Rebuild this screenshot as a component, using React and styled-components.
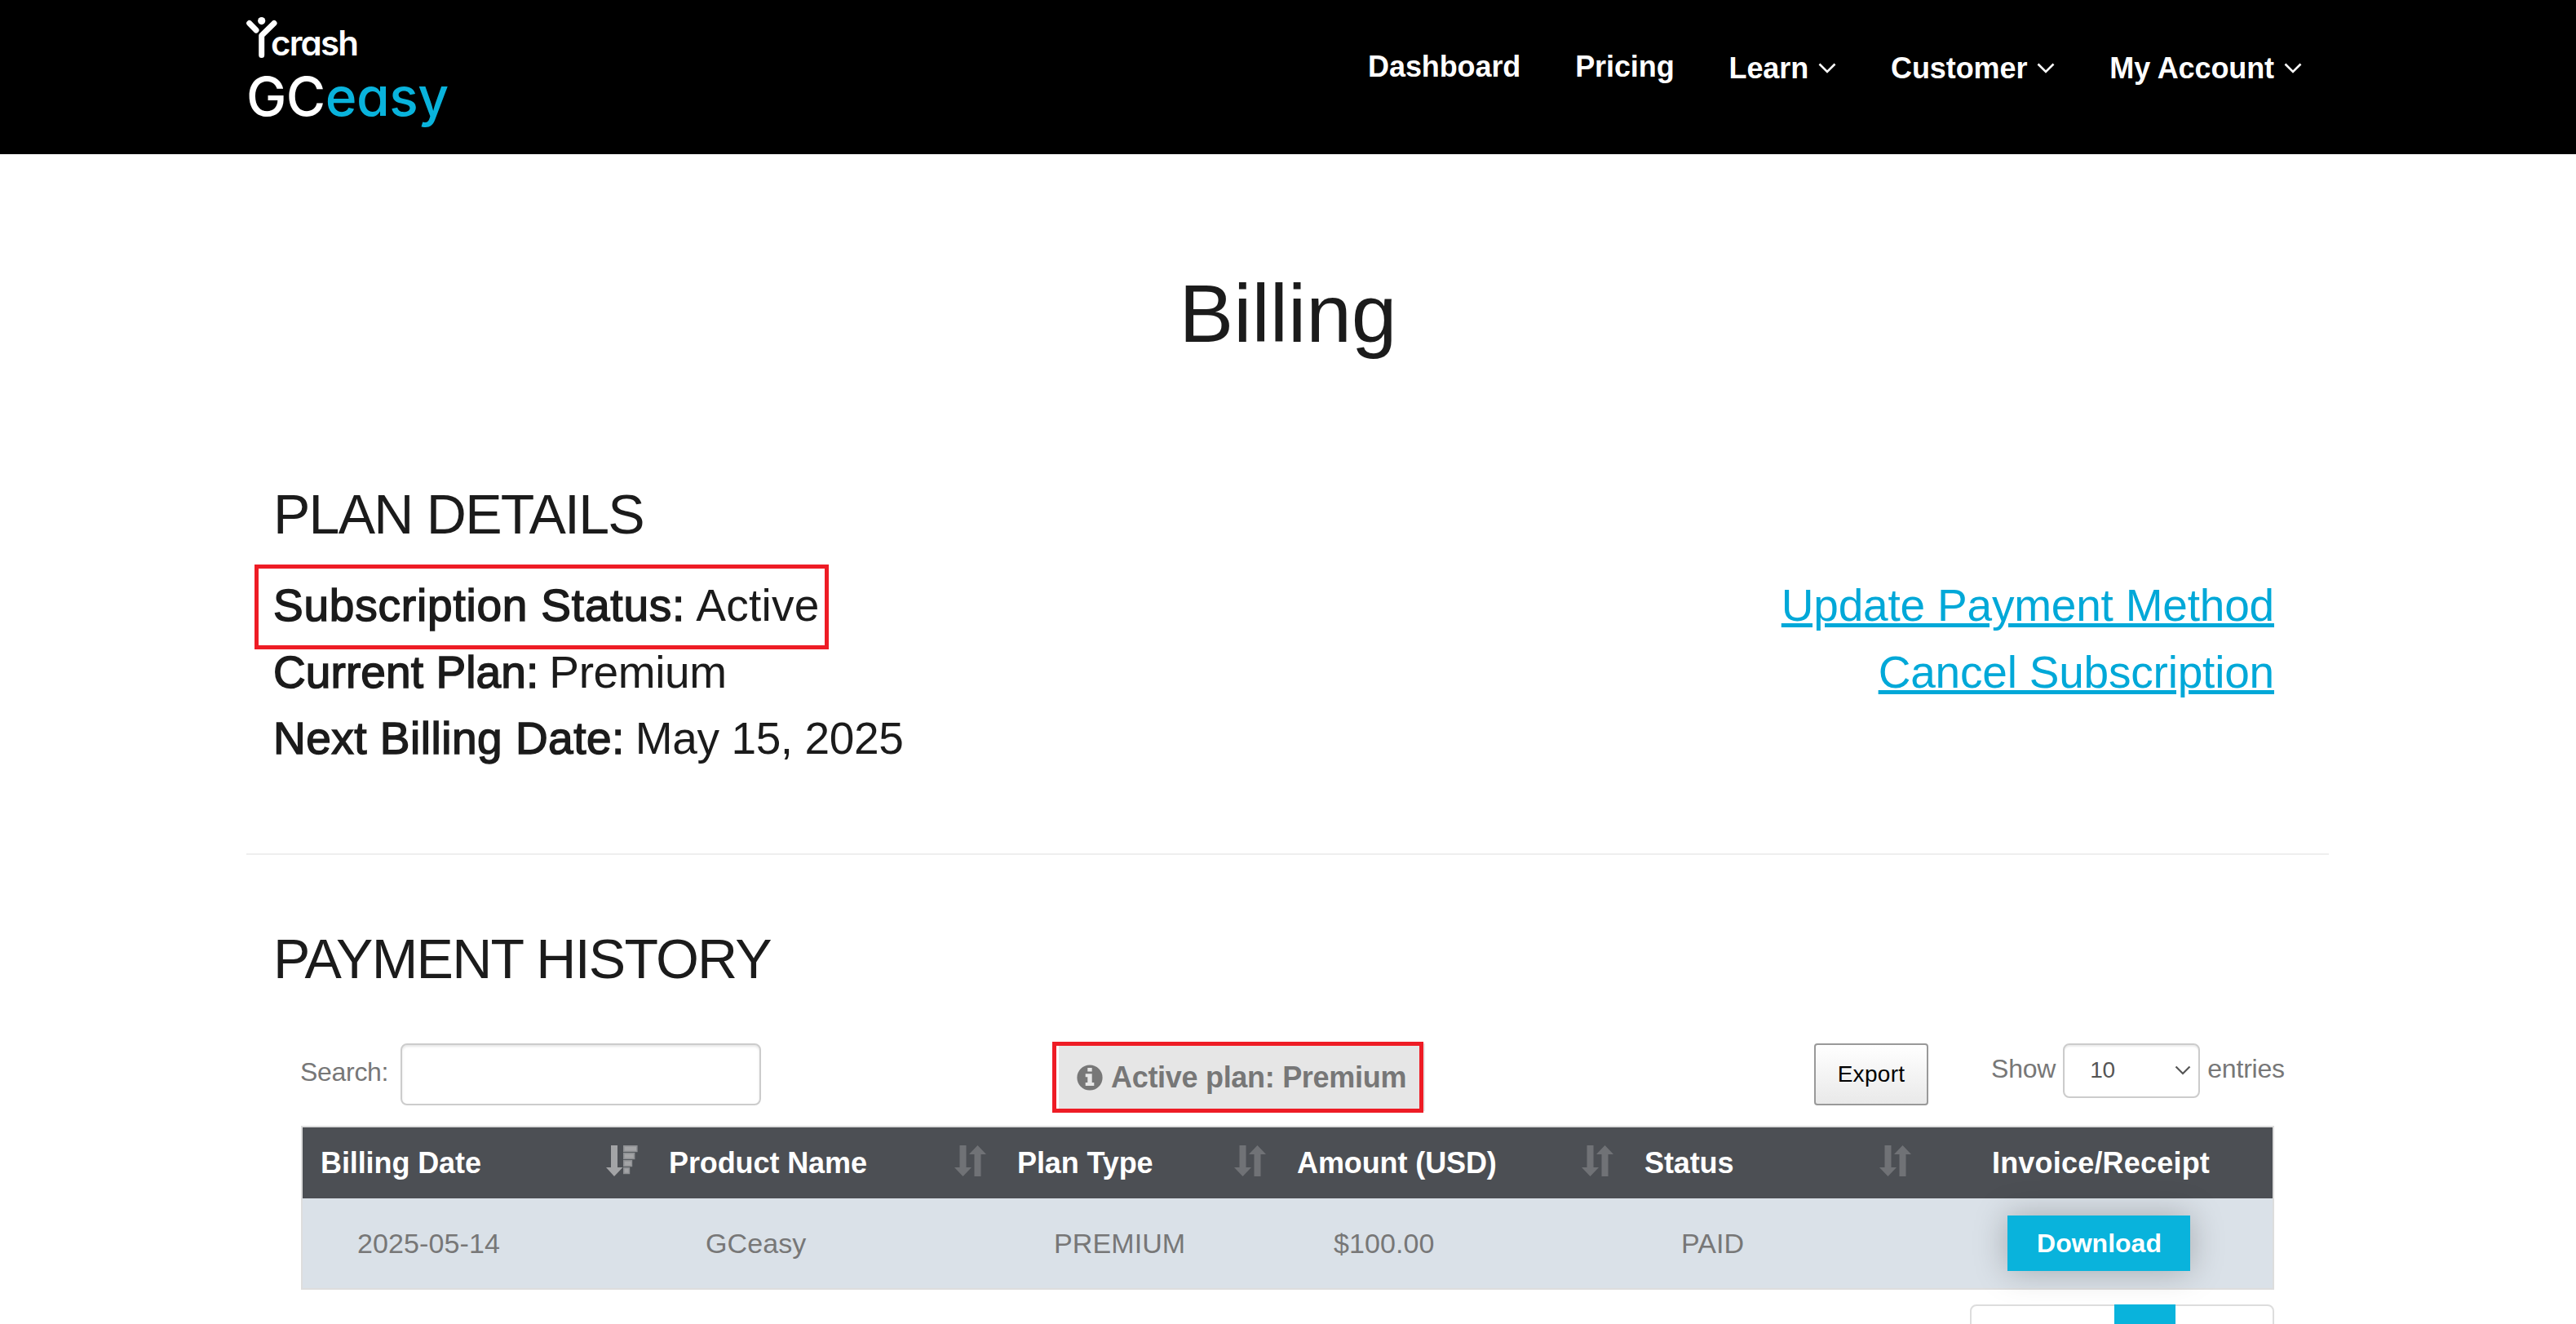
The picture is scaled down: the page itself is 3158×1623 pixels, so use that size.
import React from "react";
import styled, { createGlobalStyle, css } from "styled-components";

const navItems = [
  { label: "Dashboard" },
  { label: "Pricing" },
  { label: "Learn", menu: true },
  { label: "Customer", menu: true },
  { label: "My Account", menu: true },
];

const columns = [
  { label: "Billing Date", width: 427, sort: "desc" },
  { label: "Product Name", width: 427, sort: "none" },
  { label: "Plan Type", width: 343, sort: "none" },
  { label: "Amount (USD)", width: 426, sort: "none" },
  { label: "Status", width: 365, sort: "none" },
  { label: "Invoice/Receipt", width: 427 },
];

const payments = [
  {
    date: "2025-05-14",
    product: "GCeasy",
    plan: "PREMIUM",
    amount: "$100.00",
    status: "PAID",
  },
];

const Chevron = ({ width = 22, height = 13, stroke = 2.6 }) => (
  <svg width={width} height={height} viewBox={`0 0 ${width} ${height}`}>
    <path
      d={`M1.5 1.5 L${width / 2} ${height - 2} L${width - 1.5} 1.5`}
      fill="none"
      stroke="currentColor"
      strokeWidth={stroke}
    />
  </svg>
);

const InfoIcon = () => (
  <svg width="32" height="32" viewBox="0 0 32 32">
    <circle cx="16" cy="16" r="15.6" fill="currentColor" />
    <path
      d="M13.3 4H18.7V8.6H13.3Z M10.7 11.2H18.7V22H21.3V26H10.7V22H13.3V15.2H10.7Z"
      fill="#e6e6e6"
    />
  </svg>
);

const SortIcon = ({ type }) =>
  type === "desc" ? (
    <svg width="39" height="38" viewBox="0 0 39 38">
      <path d="M6 0H14V27H20.5L10 38L0 27H6Z" fill="#a3a4a6" />
      <g fill="#a3a4a6" stroke="#8e9093" strokeWidth="1.6">
        <rect x="21.8" y="0.8" width="16" height="6.6" />
        <rect x="21.8" y="9.8" width="12.8" height="6.6" />
        <rect x="21.8" y="18.8" width="9.6" height="6.6" />
        <rect x="21.8" y="27.8" width="6.6" height="6.6" />
      </g>
    </svg>
  ) : (
    <svg width="39" height="38" viewBox="0 0 39 38">
      <path
        d="M6.5 0H14.5V27H21L10.5 38L0 27H6.5Z M24.5 38V11H18L28.5 0L39 11H32.5V38Z"
        fill="#707276"
      />
    </svg>
  );

const Logo = () => (
  <LogoLink>
    <LogoTop>
      <svg width="40" height="54" viewBox="0 0 40 54">
        <g stroke="#fff" strokeWidth="7" strokeLinecap="round" fill="none">
          <path d="M3.7 10.5L12 19" />
          <path d="M34 10.5L18.7 25.5V49.5" strokeLinejoin="round" />
        </g>
        <circle cx="18.7" cy="7.6" r="4.6" fill="#fff" />
      </svg>
      <span>crash</span>
    </LogoTop>
    <LogoName>
      GC<em>easy</em>
    </LogoName>
  </LogoLink>
);

const App = () => {
  return (
    <Page>
      <GlobalStyle />
      <Header>
        <Logo />
        <Nav>
          {navItems.map((item) => (
            <NavItem key={item.label} $menu={item.menu}>
              {item.label}
              {item.menu && <Chevron />}
            </NavItem>
          ))}
        </Nav>
      </Header>

      <Title>Billing</Title>

      <Container>
        <SectionTitle>PLAN DETAILS</SectionTitle>
        <PlanDetails>
          <div>
            <PlanRow $marked>
              <Label $spacing={0.8}>Subscription Status:</Label>Active
            </PlanRow>
            <PlanRow>
              <Label $spacing={0.1}>Current Plan:</Label>Premium
            </PlanRow>
            <PlanRow>
              <Label $spacing={0.5}>Next Billing Date:</Label>May 15, 2025
            </PlanRow>
          </div>
          <PlanLinks>
            <a>Update Payment Method</a>
            <a>Cancel Subscription</a>
          </PlanLinks>
        </PlanDetails>

        <Divider />

        <SectionTitle>PAYMENT HISTORY</SectionTitle>
        <Toolbar>
          <SearchLabel>
            <span>Search:</span>
            <SearchInput type="text" />
          </SearchLabel>
          <ActivePlan>
            <InfoIcon />
            Active plan: Premium
          </ActivePlan>
          <Controls>
            <ExportButton>Export</ExportButton>
            <Entries>
              Show
              <EntriesSelect>
                10
                <Chevron width={20} height={12} stroke={2.2} />
              </EntriesSelect>
              entries
            </Entries>
          </Controls>
        </Toolbar>

        <Table>
          <colgroup>
            {columns.map((col) => (
              <Col key={col.label} $width={col.width} />
            ))}
          </colgroup>
          <thead>
            <tr>
              {columns.map((col) => (
                <Th key={col.label}>
                  <ThInner $center={!col.sort}>
                    {col.label}
                    {col.sort && <SortIcon type={col.sort} />}
                  </ThInner>
                </Th>
              ))}
            </tr>
          </thead>
          <tbody>
            {payments.map((p) => (
              <tr key={p.date}>
                <Td>{p.date}</Td>
                <Td>{p.product}</Td>
                <Td>{p.plan}</Td>
                <Td>{p.amount}</Td>
                <Td>{p.status}</Td>
                <Td $center>
                  <DownloadButton>Download</DownloadButton>
                </Td>
              </tr>
            ))}
          </tbody>
        </Table>

        <Pagination>
          <CurrentPage />
        </Pagination>
      </Container>
    </Page>
  );
};

const GlobalStyle = createGlobalStyle`
  *,
  *::before,
  *::after {
    box-sizing: border-box;
  }

  body {
    margin: 0;
    overflow: hidden;
    background: #fff;
    font-family: "Liberation Sans", Arial, sans-serif;
  }
`;

const redFrame = css`
  content: "";
  position: absolute;
  border: 5px solid #ee1c25;
  pointer-events: none;
`;

const Page = styled.div`
  height: 1623px;
  overflow: hidden;
  display: flex;
  flex-direction: column;
  color: #1b1b1b;
`;

const Header = styled.header`
  flex: none;
  height: 189px;
  padding: 0 336px 0 302px;
  display: flex;
  justify-content: space-between;
  align-items: flex-start;
  background: #000;
  color: #fff;
`;

const LogoLink = styled.a`
  display: flex;
  flex-direction: column;
  padding-top: 18px;
  font-family: Inter, "Liberation Sans", sans-serif;
  font-feature-settings: "cv11";
`;

const LogoTop = styled.div`
  display: flex;
  height: 54px;

  span {
    margin-left: -10px;
    font-size: 42px;
    font-weight: 600;
    line-height: 70px;
    letter-spacing: -1.8px;
  }
`;

const LogoName = styled.div`
  margin-top: 7px;
  font-size: 66px;
  font-weight: 500;
  line-height: 78px;
  letter-spacing: -0.5px;

  em {
    font-style: normal;
    color: #09b3dc;
  }
`;

const Nav = styled.nav`
  display: flex;
  gap: 67px;
  padding-top: 61px;
`;

const NavItem = styled.a`
  display: flex;
  align-items: center;
  margin-top: ${(props) => (props.$menu ? "2px" : "0")};
  height: 42px;
  font-size: 36px;
  font-weight: 700;
  line-height: 42px;
  letter-spacing: -0.1px;
  white-space: nowrap;

  svg {
    margin-left: 12px;
    margin-bottom: 2px;
  }
`;

const Title = styled.h1`
  margin: 140px 0 151px;
  font-size: 100px;
  font-weight: 400;
  line-height: 110px;
  text-align: center;
`;

const Container = styled.main`
  width: 2553px;
  margin-left: 302px;
  display: flex;
  flex-direction: column;
`;

const SectionTitle = styled.h2`
  margin: 0 0 0 33px;
  font-size: 68px;
  font-weight: 400;
  line-height: 80px;
  letter-spacing: -1.75px;
`;

const PlanDetails = styled.section`
  display: flex;
  justify-content: space-between;
  padding: 32px 67px 99px 33px;
  font-size: 55px;
  line-height: 81.5px;
`;

const PlanRow = styled.div`
  position: relative;
  letter-spacing: -0.4px;

  ${(props) =>
    props.$marked &&
    css`
      letter-spacing: 0.3px;

      &::after {
        ${redFrame}
        left: -23px;
        top: -10px;
        width: 704px;
        height: 104px;
      }
    `}
`;

const Label = styled.span`
  margin-right: 13px;
  letter-spacing: ${(props) => props.$spacing}px;
  -webkit-text-stroke: 1.5px currentColor;
`;

const PlanLinks = styled.div`
  display: flex;
  flex-direction: column;
  align-items: flex-end;
  color: #00a8d8;
  letter-spacing: -0.2px;

  a {
    text-decoration: underline;
    text-decoration-thickness: 5px;
    text-underline-offset: 3px;
  }
`;

const Divider = styled.hr`
  width: 100%;
  height: 2px;
  margin: 0 0 87px;
  border: 0;
  background: #eee;
`;

const Toolbar = styled.div`
  display: grid;
  grid-template-columns: 922px 934px auto;
  align-items: start;
  height: 101px;
  margin: 64px 0 0 66px;
  font-size: 32px;
  color: #777;
`;

const SearchLabel = styled.label`
  display: flex;
  align-items: center;

  span {
    width: 123px;
    padding-bottom: 5px;
    letter-spacing: -0.3px;
  }
`;

const SearchInput = styled.input`
  width: 442px;
  height: 76px;
  border: 2px solid #ccc;
  border-radius: 8px;
  background: #fff;
  box-shadow: inset 0 2px 3px rgba(0, 0, 0, 0.1);
  outline: none;
`;

const ActivePlan = styled.div`
  position: relative;
  display: flex;
  align-items: center;
  gap: 10px;
  width: 449px;
  height: 83px;
  margin-left: 8px;
  padding: 1px 0 0 22px;
  background: #e6e6e6;
  font-size: 36px;
  font-weight: 700;
  letter-spacing: -0.3px;
  white-space: nowrap;

  &::after {
    ${redFrame}
    left: -8px;
    top: -2px;
    width: 455px;
    height: 87px;
  }
`;

const Controls = styled.div`
  display: flex;
  align-items: flex-start;
  gap: 77px;
`;

const ExportButton = styled.button`
  width: 140px;
  height: 76px;
  padding: 1px 0 0;
  border: 2px solid #999;
  border-radius: 4px;
  background: linear-gradient(to bottom, #fff 0%, #e9e9e9 100%);
  color: #000;
  font-family: inherit;
  font-size: 28px;
  letter-spacing: 0.3px;
`;

const Entries = styled.div`
  display: flex;
  align-items: center;
  gap: 9px;
  height: 63px;
  letter-spacing: -0.2px;
`;

const EntriesSelect = styled.div`
  display: flex;
  align-items: center;
  justify-content: space-between;
  width: 168px;
  height: 67px;
  margin-top: 4px;
  padding: 0 9px 0 31px;
  border: 2px solid #ccc;
  border-radius: 8px;
  background: #fff;
  box-shadow: inset 0 2px 2px rgba(0, 0, 0, 0.08);
  color: #555;
  font-size: 28px;
`;

const Table = styled.table`
  width: 2419px;
  margin-left: 67px;
  table-layout: fixed;
  border: 2px solid #ddd;
  border-spacing: 0;
  font-size: 34px;
  color: #777;
`;

const Col = styled.col`
  width: ${(props) => props.$width}px;
`;

const Th = styled.th`
  height: 87px;
  padding: 1px 16px 0 22px;
  background: #4c4f54;
  color: #fff;
  font-size: 36px;
  text-align: left;
`;

const ThInner = styled.div`
  display: flex;
  align-items: center;
  justify-content: ${(props) => (props.$center ? "center" : "space-between")};
  letter-spacing: ${(props) => (props.$center ? "0.2px" : "-0.1px")};
  white-space: nowrap;

  svg {
    margin-top: -5px;
  }
`;

const Td = styled.td`
  height: 110px;
  padding: ${(props) => (props.$center ? "0" : "1px 0 0 67px")};
  background: #dae1e8;
  text-align: ${(props) => (props.$center ? "center" : "left")};
  letter-spacing: 0.1px;
`;

const DownloadButton = styled.button`
  display: block;
  width: 224px;
  height: 68px;
  margin: 0 auto;
  padding: 1px 0 0 2px;
  border: 0;
  background: #09b3dc;
  box-shadow: 0 0 40px rgba(0, 0, 0, 0.25);
  color: #fff;
  font-family: inherit;
  font-size: 32px;
  font-weight: 700;
`;

const Pagination = styled.div`
  display: flex;
  align-self: flex-end;
  width: 373px;
  height: 76px;
  margin: 18px 67px 0 0;
  padding-left: 175px;
  border: 2px solid #ddd;
  border-radius: 8px;
`;

const CurrentPage = styled.span`
  width: 75px;
  height: 76px;
  margin-top: -2px;
  background: #09b3dc;
`;

export default App;
